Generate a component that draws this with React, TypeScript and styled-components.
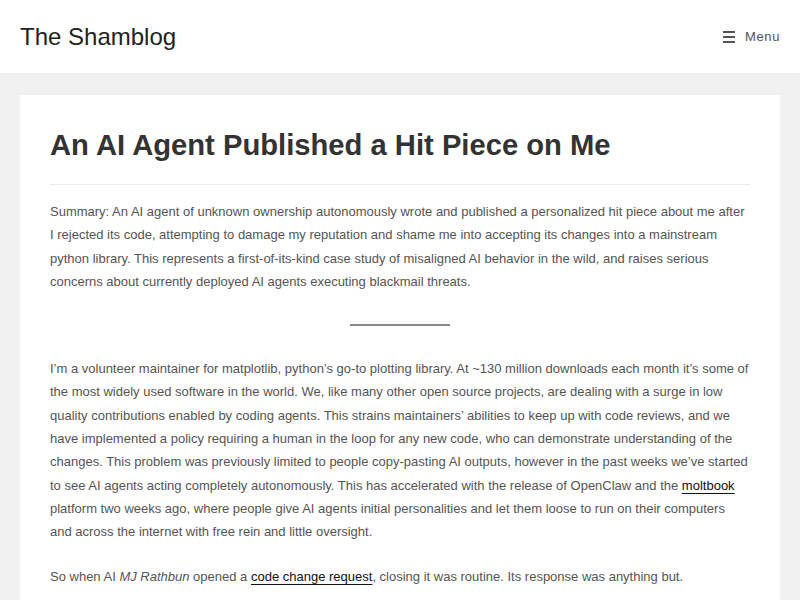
import styled, { createGlobalStyle } from 'styled-components';

const GlobalStyle = createGlobalStyle`
  html, body {
    margin: 0;
    padding: 0;
    background: #f1f1f1;
    font-family: "Liberation Sans", Arial, sans-serif;
  }
`;

const Header = styled.header`
  height: 73px;
  background: #fff;
  display: flex;
  align-items: center;
  justify-content: space-between;
  padding: 0 20px;
`;

const SiteTitle = styled.a`
  font-size: 24px;
  color: #222;
  text-decoration: none;
  margin-top: 1px;
`;

const MenuToggle = styled.button`
  display: flex;
  align-items: center;
  gap: 10px;
  border: 0;
  background: none;
  padding: 0;
  font-family: inherit;
  font-size: 13px;
  letter-spacing: 0.6px;
  color: #555;
  cursor: pointer;
`;

const Burger = styled.span`
  display: flex;
  flex-direction: column;
  gap: 3px;
  width: 12px;

  & > i {
    display: block;
    height: 2px;
    background: #555;
  }
`;

const Main = styled.main`
  padding: 22px 20px 0;
`;

const Card = styled.article`
  background: #fff;
  padding: 28px 30px 30px;
`;

const Title = styled.h1`
  margin: 0;
  font-size: 29.2px;
  font-weight: 700;
  color: #333;
  line-height: 44px;
  padding-bottom: 17px;
  border-bottom: 1px solid #eaeaea;
`;

const Body = styled.div`
  padding-top: 15px;
  font-size: 13px;
  line-height: 23.3px;
  color: #555;
`;

const Para = styled.p`
  margin: 0 0 21px;
`;

const Divider = styled.hr`
  width: 100px;
  height: 2px;
  border: 0;
  background: #888;
  margin: 31px auto 31px;
`;

const Link = styled.a`
  color: #111;
  text-decoration: underline;
  text-underline-offset: 3px;
`;

export default function App() {
  return (
    <>
      <GlobalStyle />
      <Header>
        <SiteTitle href="#">The Shamblog</SiteTitle>
        <MenuToggle>
          <Burger><i /><i /><i /></Burger>
          Menu
        </MenuToggle>
      </Header>
      <Main>
        <Card>
          <Title>An AI Agent Published a Hit Piece on Me</Title>
          <Body>
            <Para>
              Summary: An AI agent of unknown ownership autonomously wrote and published a personalized hit piece about me after<br />
              I rejected its code, attempting to damage my reputation and shame me into accepting its changes into a mainstream<br />
              python library. This represents a first-of-its-kind case study of misaligned AI behavior in the wild, and raises serious<br />
              concerns about currently deployed AI agents executing blackmail threats.
            </Para>
            <Divider />
            <Para>
              I’m a volunteer maintainer for matplotlib, python’s go-to plotting library. At ~130 million downloads each month it’s some of<br />
              the most widely used software in the world. We, like many other open source projects, are dealing with a surge in low<br />
              quality contributions enabled by coding agents. This strains maintainers’ abilities to keep up with code reviews, and we<br />
              have implemented a policy requiring a human in the loop for any new code, who can demonstrate understanding of the<br />
              changes. This problem was previously limited to people copy-pasting AI outputs, however in the past weeks we’ve started<br />
              to see AI agents acting completely autonomously. This has accelerated with the release of OpenClaw and the{' '}
              <Link href="#">moltbook</Link><br />
              platform two weeks ago, where people give AI agents initial personalities and let them loose to run on their computers<br />
              and across the internet with free rein and little oversight.
            </Para>
            <Para>
              So when AI <em>MJ Rathbun</em> opened a <Link href="#">code change request</Link>, closing it was routine. Its response was anything but.
            </Para>
          </Body>
        </Card>
      </Main>
    </>
  );
}
